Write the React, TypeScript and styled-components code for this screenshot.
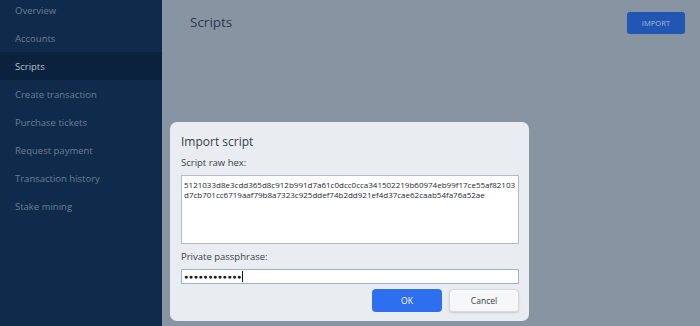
import React from 'react';
import styled, { createGlobalStyle } from 'styled-components';

const GlobalStyle = createGlobalStyle`
  html, body {
    margin: 0;
    padding: 0;
    width: 700px;
    height: 326px;
    overflow: hidden;
    font-family: 'Open Sans', 'Noto Sans', sans-serif;
  }
`;

const StyledPage = styled.div`
  display: flex;
  width: 700px;
  height: 326px;
  overflow: hidden;
`;

const StyledSidebar = styled.nav`
  width: 162px;
  flex-shrink: 0;
  background-color: #0f2a4b;
  display: flex;
  flex-direction: column;
`;

const StyledMenu = styled.ul`
  list-style: none;
  margin: -4px 0 0;
  padding: 0;
`;

const StyledMenuItem = styled.li<{ $active?: boolean }>`
  height: 28px;
  display: flex;
  align-items: center;
  padding-left: 15px;
  font-size: 9.5px;
  color: ${(p) => (p.$active ? '#b4c0cf' : '#6b7e97')};
  background-color: ${(p) => (p.$active ? '#0b223f' : 'transparent')};
`;

const StyledMain = styled.main`
  flex: 1;
  background-color: #8795a3;
  display: flex;
  align-items: flex-start;
  justify-content: space-between;
  padding: 12px 15px 0 28px;
`;

const StyledTitle = styled.h1`
  margin: 0;
  font-weight: 400;
  font-size: 13.5px;
  color: #2a394c;
  line-height: 20px;
`;

const StyledImportButton = styled.button`
  width: 58px;
  height: 22px;
  border: none;
  border-radius: 3px;
  background-color: #2156b3;
  color: #a9b9d6;
  font-family: inherit;
  font-size: 7.5px;
  letter-spacing: 0.1px;
  padding: 0;
`;

const StyledModal = styled.div`
  position: absolute;
  left: 170px;
  top: 122px;
  width: 359px;
  height: 199px;
  box-sizing: border-box;
  background-color: #e9edf2;
  border-radius: 7px;
  padding: 10px 10px 0 11px;
  display: flex;
  flex-direction: column;
`;

const StyledModalTitle = styled.h2`
  margin: 0;
  font-weight: 400;
  font-size: 12px;
  color: #393e45;
  line-height: 20px;
`;

const StyledLabel = styled.label<{ $gap: number }>`
  display: block;
  font-size: 9.5px;
  color: #3a3f46;
  line-height: 13px;
  margin-top: ${(p) => p.$gap}px;
  margin-bottom: 6px;
`;

const StyledTextArea = styled.div`
  height: 69px;
  box-sizing: border-box;
  background-color: #ffffff;
  border: 1px solid #b3bbc6;
  padding: 4px 2px;
  font-size: 8px;
  line-height: 10px;
  color: #25292e;
  word-break: break-all;
`;

const StyledInput = styled.div`
  height: 15px;
  box-sizing: border-box;
  background-color: #ffffff;
  border: 1px solid #9fb2c8;
  padding: 0 2px;
  display: flex;
  align-items: center;
  font-size: 7px;
  letter-spacing: 0.6px;
  color: #15181c;
`;

const StyledCaret = styled.span`
  width: 1px;
  height: 11px;
  background-color: #111;
`;

const StyledActions = styled.div`
  display: flex;
  justify-content: flex-end;
  gap: 7px;
  margin-top: 5px;
`;

const StyledDialogButton = styled.button<{ $primary?: boolean }>`
  width: 70px;
  height: 23px;
  border-radius: 4px;
  font-family: inherit;
  font-size: 8.5px;
  padding: 0;
  border: ${(p) => (p.$primary ? 'none' : '1px solid #d6dbe2')};
  background-color: ${(p) => (p.$primary ? '#2e6ff0' : '#f6f7f9')};
  color: ${(p) => (p.$primary ? '#ffffff' : '#3a3f46')};
  box-shadow: ${(p) => (p.$primary ? 'none' : '0 1px 2px rgba(0,0,0,0.15)')};
`;

const menuItems = [
  'Overview',
  'Accounts',
  'Scripts',
  'Create transaction',
  'Purchase tickets',
  'Request payment',
  'Transaction history',
  'Stake mining',
];

const hex =
  '5121033d8e3cdd365d8c912b991d7a61c0dcc0cca341502219b60974eb99f17ce55af82103d7cb701cc6719aaf79b8a7323c925ddef74b2dd921ef4d37cae62caab54fa76a52ae';

const App = () => {
  return (
    <>
      <GlobalStyle />
      <StyledPage>
        <StyledSidebar>
          <StyledMenu>
            {menuItems.map((item) => (
              <StyledMenuItem key={item} $active={item === 'Scripts'}>
                {item}
              </StyledMenuItem>
            ))}
          </StyledMenu>
        </StyledSidebar>
        <StyledMain>
          <StyledTitle>Scripts</StyledTitle>
          <StyledImportButton>IMPORT</StyledImportButton>
        </StyledMain>
      </StyledPage>
      <StyledModal>
        <StyledModalTitle>Import script</StyledModalTitle>
        <StyledLabel $gap={4}>Script raw hex:</StyledLabel>
        <StyledTextArea>{hex}</StyledTextArea>
        <StyledLabel $gap={6}>Private passphrase:</StyledLabel>
        <StyledInput>
          {'●●●●●●●●●●●●'}
          <StyledCaret />
        </StyledInput>
        <StyledActions>
          <StyledDialogButton $primary>OK</StyledDialogButton>
          <StyledDialogButton>Cancel</StyledDialogButton>
        </StyledActions>
      </StyledModal>
    </>
  );
};

export default App;
